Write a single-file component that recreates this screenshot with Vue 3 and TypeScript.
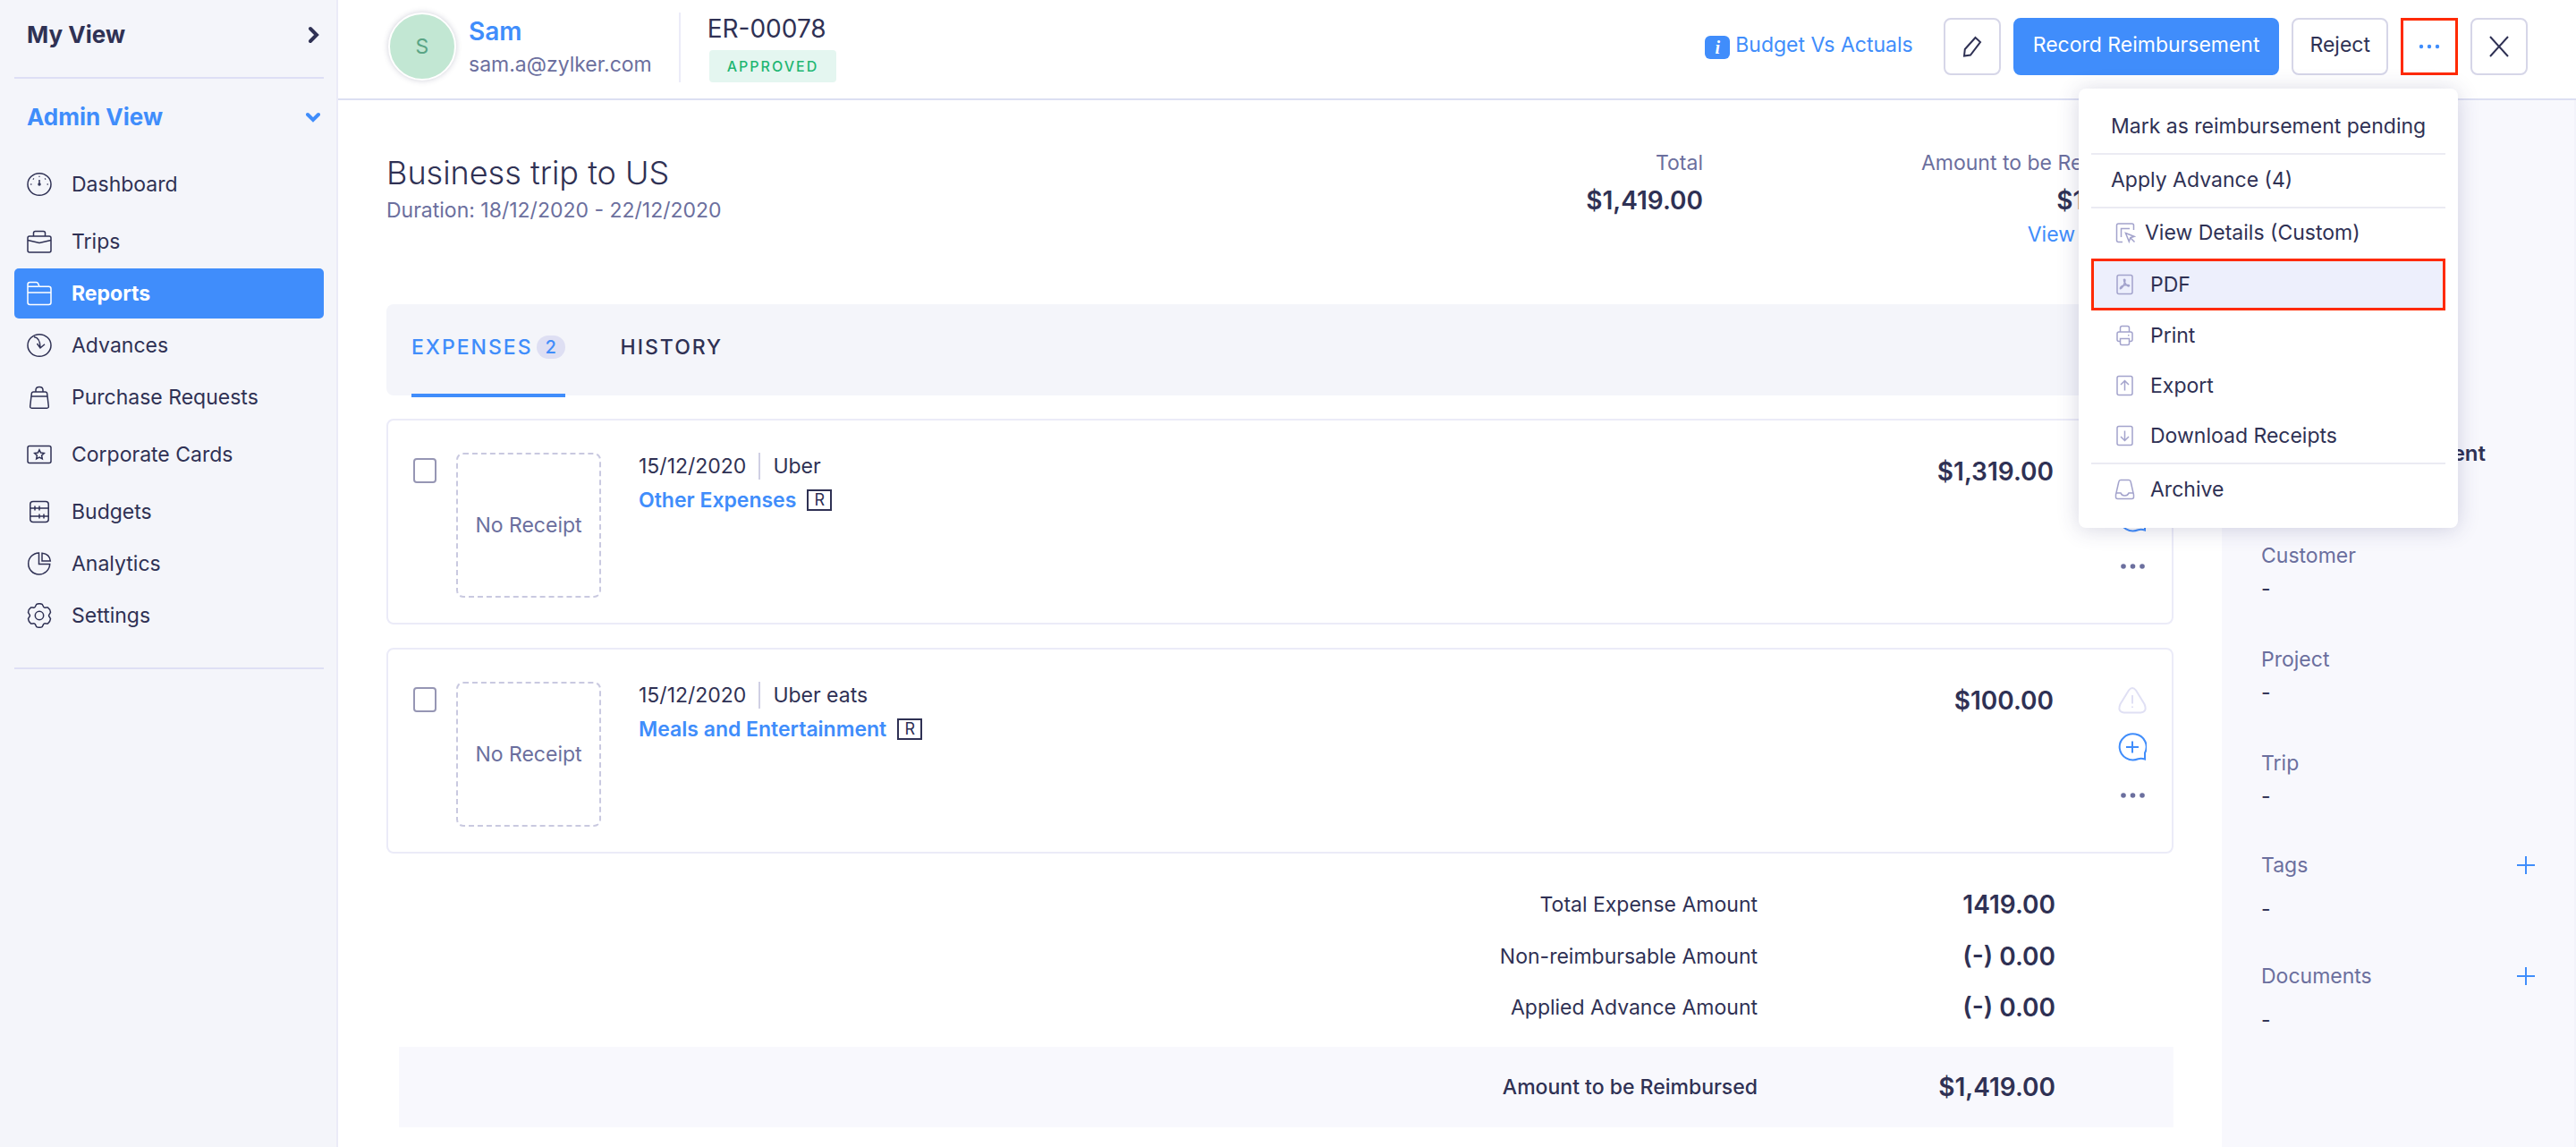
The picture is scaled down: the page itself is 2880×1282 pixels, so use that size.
<script setup lang="ts">
import { ref } from 'vue'

interface NavItem {
  label: string
  icon: string
}

interface Expense {
  id: number
  date: string
  merchant: string
  category: string
  amount: string
}

interface MenuItem {
  label: string
  icon?: string
  divider?: boolean
}

/* Outline of a six-tooth cog centred on 14,14 */
function cogOutline(): string {
  const at = (radius: number, degrees: number): string => {
    const a = (degrees * Math.PI) / 180
    return `${(14 + radius * Math.cos(a)).toFixed(2)} ${(14 + radius * Math.sin(a)).toFixed(2)}`
  }
  let d = `M${at(13, -104)}`
  for (let i = 0; i < 6; i++) {
    const t = -90 + i * 60
    d += `L${at(13, t - 14)}Q${at(14, t)} ${at(13, t + 14)}L${at(11.6, t + 21)}Q${at(9.6, t + 30)} ${at(11.6, t + 39)}`
  }
  return d + 'Z'
}

const navIcons: Record<string, string[]> = {
  dashboard: [
    'M1 14a13 12.3 0 1 0 26 0a13 12.3 0 1 0 -26 0Z',
    'M14 9v5M13 14a1 1 0 1 0 2 0a1 1 0 1 0 -2 0Z',
    'M14 4.8v1M7 7.6l.8.8M21 7.6l-.8.8M4.2 14h1.2M22.6 14h1.2',
  ],
  trips: [
    'M3 8h22q2 0 2 2v14q0 2-2 2H3q-2 0-2-2V10q0-2 2-2Z',
    'M7.5 8V4.500q0-2 2-2h9q2 0 2 2V8',
    'M1 12.500l13 3 13-3',
  ],
  reports: ['M1 24V4q0-2.500 2.500-2.500H10.500q1.500 0 2.200 1.500L14 6.200H24.500q2.500 0 2.500 2.500V24q0 2.500-2.500 2.500h-21Q1 26.500 1 24Z', 'M1 13h26M1.200 6.200H13'],
  advances: ['M1 14a13 12.300 0 1 0 26 0a13 12.300 0 1 0 -26 0Z', 'M8 4.500q7 1 7 12M11.500 12l3.500 5 5-4.200'],
  purchase: [
    'M7.500 8h13q2 0 2.200 2l1.600 14q.2 2.200-1.800 2.200h-17q-2 0-1.800-2.200L5.300 10q.2-2 2.200-2Z',
    'M5 13h18',
    'M10 8V6q0-3.500 4-3.500t4 3.500v2',
  ],
  cards: [
    'M3 4.500h22q2 0 2 2v15q0 2-2 2H3q-2 0-2-2v-15q0-2 2-2Z',
    'M14 8.800l1.600 3.300 3.700.5-2.700 2.500.7 3.700-3.300-1.800-3.300 1.800.7-3.700-2.700-2.500 3.700-.5Z',
  ],
  budgets: [
    'M7 2.500h14q3.200 0 3.200 3v17q0 3-3.200 3H7q-3.200 0-3.200-3v-17q0-3 3.200-3Z',
    'M4 10h20M4 19h20',
    'M9 7.500v5M14 7.500v5M14 16.500v5M19 16.500v5',
  ],
  analytics: ['M13.500 2A12 12 0 1 0 25.700 14.500H13.500Z', 'M17 2.200v8.800h9.300Q25.500 3 17 2.200Z'],
  settings: [cogOutline(), 'M9.300 14a4.700 4.700 0 1 0 9.400 0a4.700 4.700 0 1 0 -9.400 0Z'],
}

const menuIcons: Record<string, string[]> = {
  details: ['M21.500 9V4q0-2-2-2H4.500q-2 0-2 2v16.500q0 2 2 2H9', 'M7.500 17V7.500H17', 'M12.500 12.500l9.500 3.800-4.200 1.400-1.500 4.300ZM18 18l4.500 4.500'],
  pdf: ['M5 1.500h13q2 0 2 2v17q0 2-2 2H5q-2 0-2-2v-17q0-2 2-2Z', 'M10.500 6.500q2-1 1.200 2.500-1.200 5-4.200 7.500-1.500 1-1-.8 1.500-3 7.500-3.200 3-.2 2.500 1.200-1.800 1.200-4.500-3.200-1.700-2.300-1.500-4Z'],
  print: ['M6.500 8V3.500q0-2 2-2h6q2 0 2 2V8', 'M6.500 18.500H5q-2 0-2-2V10q0-2 2-2h13q2 0 2 2v6.500q0 2-2 2h-1.500', 'M6.500 15.500h10v5.500q0 1.500-1.500 1.500H8q-1.500 0-1.500-1.500ZM15 11.800h1.500'],
  export: ['M5 1.500h13q2 0 2 2v17q0 2-2 2H5q-2 0-2-2v-17q0-2 2-2Z', 'M11.500 17.500v-11M7 11l4.500-4.500L16 11'],
  download: ['M5 1.500h13q2 0 2 2v17q0 2-2 2H5q-2 0-2-2v-17q0-2 2-2Z', 'M11.500 6.500v11M7 13l4.500 4.500L16 13'],
  archive: ['M7 1.500h9q1.800 0 2.200 2L21.500 18v2.500q0 2-2 2h-16q-2 0-2-2V18L4.800 3.500q.4-2 2.200-2Z', 'M2 16h5q1 3 4.500 3t4.500-3h5'],
}

const navGroups: NavItem[][] = [
  [{ label: 'Dashboard', icon: 'dashboard' }],
  [
    { label: 'Trips', icon: 'trips' },
    { label: 'Reports', icon: 'reports' },
    { label: 'Advances', icon: 'advances' },
    { label: 'Purchase Requests', icon: 'purchase' },
  ],
  [{ label: 'Corporate Cards', icon: 'cards' }],
  [
    { label: 'Budgets', icon: 'budgets' },
    { label: 'Analytics', icon: 'analytics' },
    { label: 'Settings', icon: 'settings' },
  ],
]

const menuItems: MenuItem[] = [
  { label: 'Mark as reimbursement pending' },
  { label: 'Apply Advance (4)', divider: true },
  { label: 'View Details (Custom)', icon: 'details', divider: true },
  { label: 'PDF', icon: 'pdf' },
  { label: 'Print', icon: 'print' },
  { label: 'Export', icon: 'export' },
  { label: 'Download Receipts', icon: 'download' },
  { label: 'Archive', icon: 'archive', divider: true },
]

const expenses: Expense[] = [
  { id: 1, date: '15/12/2020', merchant: 'Uber', category: 'Other Expenses', amount: '$1,319.00' },
  { id: 2, date: '15/12/2020', merchant: 'Uber eats', category: 'Meals and Entertainment', amount: '$100.00' },
]

const totals = [
  { label: 'Total Expense Amount', value: '1419.00' },
  { label: 'Non-reimbursable Amount', value: '(-) 0.00' },
  { label: 'Applied Advance Amount', value: '(-) 0.00' },
]

const currentPage = ref('Reports')
const activeAction = ref('PDF')
const menuOpen = ref(true)
const selected = ref<number[]>([])
</script>

<template>
  <div class="app">
    <aside class="sidebar">
      <button class="view-switch" type="button">
        My View
        <svg width="16" height="20" viewBox="0 0 16 20" aria-hidden="true"><path d="M5 3l7 7-7 7" /></svg>
      </button>
      <hr class="rule" />
      <button class="view-switch admin" type="button">
        Admin View
        <svg width="16" height="16" viewBox="0 0 16 16" aria-hidden="true"><path d="M2 5l6 6 6-6" /></svg>
      </button>
      <nav class="nav">
        <ul v-for="(group, g) in navGroups" :key="g">
          <li v-for="item in group" :key="item.label">
            <a href="#" class="nav-link" :class="{ current: item.label === currentPage }" @click.prevent="currentPage = item.label">
              <svg width="28" height="28" viewBox="0 0 28 28" aria-hidden="true">
                <path v-for="d in navIcons[item.icon]" :key="d" :d="d" />
              </svg>
              {{ item.label }}
            </a>
          </li>
        </ul>
      </nav>
      <hr class="rule" />
    </aside>

    <main class="main">
      <header class="topbar">
        <span class="avatar">S</span>
        <div class="person">
          <a href="#" class="person-name">Sam</a>
          <span class="person-mail">sam.a@zylker.com</span>
        </div>
        <div class="report-id">
          <span class="report-number">ER-00078</span>
          <span class="status">APPROVED</span>
        </div>
        <div class="actions">
          <a href="#" class="budget-link"><i class="info">i</i>Budget Vs Actuals</a>
          <button class="btn icon-btn" type="button" aria-label="Edit">
            <svg width="24" height="24" viewBox="0 0 24 24" aria-hidden="true"><path d="M15.500 2l5.500 5L10 21.500 3 22.500l.8-7.500Z" /></svg>
          </button>
          <button class="btn primary" type="button">Record Reimbursement</button>
          <button class="btn" type="button">Reject</button>
          <div class="more">
            <button class="btn icon-btn more-btn" type="button" aria-label="More" @click="menuOpen = !menuOpen">
              <svg class="dots" width="24" height="6" viewBox="0 0 24 6" aria-hidden="true">
                <circle cx="3" cy="3" r="2.200" /><circle cx="12" cy="3" r="2.200" /><circle cx="21" cy="3" r="2.200" />
              </svg>
            </button>
            <ul v-if="menuOpen" class="menu">
              <li v-for="item in menuItems" :key="item.label" :class="{ divided: item.divider }">
                <button type="button" class="menu-item" :class="{ active: item.label === activeAction, snug: item.icon === 'details' }" @click="activeAction = item.label">
                  <svg v-if="item.icon" width="24" height="24" viewBox="0 0 24 24" aria-hidden="true">
                    <path v-for="d in menuIcons[item.icon]" :key="d" :d="d" />
                  </svg>
                  {{ item.label }}
                </button>
              </li>
            </ul>
          </div>
          <button class="btn icon-btn" type="button" aria-label="Close">
            <svg width="24" height="24" viewBox="0 0 24 24" aria-hidden="true"><path d="M2 1l20 22M22 1L2 23" /></svg>
          </button>
        </div>
      </header>

      <div class="body">
        <section class="content">
          <div class="summary">
            <div class="trip">
              <h1>Business trip to US</h1>
              <p>Duration: 18/12/2020 - 22/12/2020</p>
            </div>
            <div class="figure">
              <span>Total</span>
              <strong>$1,419.00</strong>
            </div>
            <div class="figure wide">
              <span>Amount to be Reimbursed</span>
              <strong>$1,419.00</strong>
              <a href="#">View Summary</a>
            </div>
          </div>

          <div class="tabs">
            <button class="tab on" type="button">EXPENSES <span class="count">2</span></button>
            <button class="tab" type="button">HISTORY</button>
          </div>

          <article v-for="e in expenses" :key="e.id" class="card">
            <input v-model="selected" type="checkbox" class="check" :value="e.id" :aria-label="e.category" />
            <div class="receipt">No Receipt</div>
            <div class="info-block">
              <div class="line">
                <span>{{ e.date }}</span>
                <span class="merchant">{{ e.merchant }}</span>
              </div>
              <div class="category">
                <a href="#">{{ e.category }}</a>
                <span class="reimb">R</span>
              </div>
            </div>
            <strong class="amount">{{ e.amount }}</strong>
            <div class="tools">
              <button type="button" class="tool warn" aria-label="Violations">
                <svg width="32" height="32" viewBox="0 0 32 32" aria-hidden="true"><path d="M12 4.500q4-5 8 0l9.500 15.500q3.500 8.500-4 9.500H6.500q-7.500-1-4-9.500ZM16 10v9.500M16 22.500v1.500" /></svg>
              </button>
              <button type="button" class="tool comment" aria-label="Add comment">
                <svg width="32" height="32" viewBox="0 0 32 32" aria-hidden="true"><path d="M30 29.500V22.500A15 14.500 0 1 0 22.500 29.200Q26 28.200 30 29.500ZM16 9.500v13M9 16h14" /></svg>
              </button>
              <button type="button" class="tool dots-btn" aria-label="More">
                <svg width="28" height="8" viewBox="0 0 28 8" aria-hidden="true">
                  <circle cx="4" cy="4" r="2.800" /><circle cx="14.500" cy="4" r="2.800" /><circle cx="25" cy="4" r="2.800" />
                </svg>
              </button>
            </div>
          </article>

          <table class="totals">
            <tbody>
              <tr v-for="row in totals" :key="row.label">
                <th scope="row">{{ row.label }}</th>
                <td>{{ row.value }}</td>
              </tr>
            </tbody>
            <tfoot>
              <tr>
                <th scope="row">Amount to be Reimbursed</th>
                <td>$1,419.00</td>
              </tr>
            </tfoot>
          </table>
        </section>

        <aside class="details">
          <dl class="fields first">
            <div>
              <dt>Department</dt>
              <dd class="strong">Product Development</dd>
            </div>
          </dl>
          <dl class="fields">
            <div v-for="name in ['Customer', 'Project', 'Trip']" :key="name">
              <dt>{{ name }}</dt>
              <dd>-</dd>
            </div>
          </dl>
          <dl class="fields addable">
            <div v-for="name in ['Tags', 'Documents']" :key="name">
              <dt>
                {{ name }}
                <button type="button" class="add" :aria-label="'Add ' + name">
                  <svg width="20" height="20" viewBox="0 0 20 20" aria-hidden="true"><path d="M10 0v20M0 10h20" /></svg>
                </button>
              </dt>
              <dd>-</dd>
            </div>
          </dl>
        </aside>
      </div>
    </main>
  </div>
</template>

<style>
body {
  margin: 0;
  background: #fff;
}
</style>

<style scoped>
.app {
  display: flex;
  min-height: 100vh;
  font-family: Inter, 'Liberation Sans', sans-serif;
  font-size: 23px;
  line-height: 32px;
  color: #2f3154;
}
* {
  box-sizing: border-box;
}
svg {
  flex: none;
  fill: none;
  stroke: currentColor;
}
button {
  font: inherit;
  color: inherit;
  background: none;
  border: 0;
  padding: 0;
  cursor: pointer;
}
a {
  color: #408dfb;
  text-decoration: none;
}
ul,
dl,
dd,
h1,
p {
  margin: 0;
  padding: 0;
  list-style: none;
}

/* Sidebar */
.sidebar {
  flex: none;
  width: 378px;
  padding: 0 14px 0 16px;
  background: #f4f5fa;
  border-right: 2px solid #ebebf7;
}
.view-switch {
  display: flex;
  align-items: center;
  justify-content: space-between;
  width: 100%;
  height: 86px;
  padding: 0 4px 8px 14px;
  font-size: 26px;
  font-weight: 700;
}
.view-switch svg {
  stroke-width: 4;
  stroke-linecap: round;
}
.view-switch.admin {
  padding-bottom: 0;
  color: #408dfb;
}
.rule {
  height: 2px;
  margin: 0;
  border: 0;
  background: #dedff5;
}
.nav {
  display: flex;
  flex-direction: column;
  gap: 8px;
  padding: 4px 0 30px;
}
.nav ul {
  display: flex;
  flex-direction: column;
  gap: 2px;
}
.nav-link {
  display: flex;
  align-items: center;
  gap: 22px;
  height: 56px;
  padding-left: 14px;
  border-radius: 5px;
  color: inherit;
}
.nav-link svg {
  stroke-width: 1.5;
}
.nav-link.current {
  background: #408dfb;
  color: #fff;
  font-weight: 700;
}

/* Top bar */
.main {
  flex: 1;
  display: flex;
  flex-direction: column;
  min-width: 0;
}
.topbar {
  display: flex;
  align-items: flex-start;
  height: 112px;
  padding: 14px 54px 0 56px;
  border-bottom: 2px solid #dcdff2;
}
.avatar {
  display: flex;
  align-items: center;
  justify-content: center;
  width: 76px;
  height: 76px;
  border: 2px solid #fff;
  border-radius: 50%;
  background: #c2e7d3;
  box-shadow: 0 0 6px rgba(60, 60, 100, 0.25);
  color: #5aa585;
}
.person {
  display: flex;
  flex-direction: column;
  height: 78px;
  margin-left: 14px;
  padding-right: 30px;
  border-right: 2px solid #ebebf8;
}
.person-name {
  font-size: 28px;
  line-height: 42px;
  font-weight: 600;
}
.person-mail {
  line-height: 32px;
  color: #6b6f9e;
}
.report-id {
  display: flex;
  flex-direction: column;
  align-items: flex-start;
  margin-left: 30px;
}
.report-number {
  font-size: 28px;
  line-height: 36px;
}
.status {
  margin: 6px 0 0 2px;
  padding: 0 20px;
  border-radius: 4px;
  background: #e4f6f0;
  color: #1fb673;
  font-size: 16px;
  line-height: 36px;
  font-weight: 500;
  letter-spacing: 2px;
}
.actions {
  display: flex;
  align-items: center;
  gap: 14px;
  margin: 6px 0 0 auto;
}
.budget-link {
  display: flex;
  align-items: center;
  gap: 6px;
  margin: 0 20px 4px 0;
}
.info {
  width: 28px;
  height: 26px;
  margin-top: 6px;
  border-radius: 6px;
  background: #408dfb;
  color: #fff;
  font: italic 700 20px/26px 'Liberation Serif', serif;
  text-align: center;
}
.btn {
  display: flex;
  align-items: center;
  justify-content: center;
  height: 64px;
  padding: 0 18px 4px;
  border: 2px solid #d6d6e8;
  border-radius: 8px;
  background: #fff;
  white-space: nowrap;
}
.icon-btn {
  width: 64px;
  padding: 0;
}
.btn svg {
  stroke-width: 2;
}
.btn.primary {
  padding: 0 20px 4px;
  border-color: #408dfb;
  background: #408dfb;
  color: #fff;
}
.more {
  position: relative;
}
.more-btn {
  border: 3px solid #ff2a00;
  border-radius: 0;
  color: #408dfb;
}
.btn .dots {
  fill: currentColor;
  stroke: none;
}

/* Drop-down menu */
.menu {
  position: absolute;
  z-index: 2;
  top: 79px;
  right: 0;
  width: 424px;
  padding: 14px 14px 15px;
  border-radius: 8px;
  background: #fff;
  box-shadow: 0 2px 24px rgba(50, 50, 110, 0.2);
}
.divided {
  margin-top: 2px;
  border-top: 2px solid #ebebf3;
}
.menu-item {
  display: flex;
  align-items: center;
  gap: 16px;
  width: 100%;
  height: 56px;
  padding-left: 22px;
  white-space: nowrap;
}
.menu-item svg {
  margin-left: 4px;
  color: #a3a3cc;
  stroke-width: 1.5;
}
.menu-item.snug {
  gap: 10px;
  height: 54px;
  margin-bottom: 2px;
}
.menu-item.active {
  height: 58px;
  padding-left: 19px;
  border: 3px solid #ff2a00;
  background: #edeffc;
}

/* Report body */
.body {
  flex: 1;
  display: flex;
}
.content {
  flex: 1;
  min-width: 0;
  padding: 50px 54px 22px;
}
.summary {
  display: flex;
  margin-bottom: 62px;
}
.trip {
  flex: 1;
  padding-top: 9px;
}
.trip h1 {
  font-size: 36px;
  line-height: 44px;
  font-weight: 300;
}
.trip p {
  line-height: 40px;
  color: #6b6f9e;
}
.figure {
  display: flex;
  flex-direction: column;
  align-items: flex-end;
  line-height: 40px;
}
.figure.wide {
  width: 526px;
}
.figure span {
  color: #6b6f9e;
}
.figure strong {
  font-size: 28px;
  line-height: 44px;
  font-weight: 600;
}
.figure a {
  line-height: 32px;
}
.tabs {
  display: flex;
  gap: 62px;
  height: 102px;
  padding-left: 28px;
  border-radius: 8px;
  background: #f4f5fa;
}
.tab {
  display: flex;
  align-items: center;
  gap: 4px;
  height: 104px;
  padding-bottom: 4px;
  border-bottom: 4px solid transparent;
  font-weight: 500;
  letter-spacing: 2px;
}
.tab.on {
  border-color: #408dfb;
  color: #408dfb;
}
.count {
  width: 32px;
  border-radius: 13px;
  background: #dedff3;
  font-size: 20px;
  line-height: 26px;
  letter-spacing: 0;
  text-align: center;
}
.card {
  display: flex;
  align-items: flex-start;
  margin-top: 26px;
  padding: 36px 28px 28px;
  border: 2px solid #ebebf8;
  border-radius: 8px;
}
.check {
  appearance: none;
  width: 26px;
  height: 28px;
  margin: 6px 22px 0 0;
  border: 2px solid #9696b4;
  border-radius: 4px;
  background: #fff;
}
.check:checked {
  background: #408dfb;
}
.receipt {
  display: flex;
  align-items: center;
  justify-content: center;
  width: 162px;
  height: 162px;
  border: 2px dashed #c9c9e0;
  border-radius: 8px;
  color: #6b6f9e;
}
.info-block {
  flex: 1;
  padding-left: 42px;
}
.line,
.category {
  display: flex;
  align-items: center;
  line-height: 30px;
}
.merchant {
  margin-left: 14px;
  padding-left: 14px;
  border-left: 2px solid #d0d0e4;
}
.category {
  gap: 12px;
  margin-top: 8px;
  font-weight: 600;
}
.reimb {
  width: 28px;
  border: 2px solid #2f3154;
  font-size: 18px;
  line-height: 20px;
  font-weight: 400;
  text-align: center;
}
.amount {
  font-size: 28px;
  line-height: 42px;
  font-weight: 600;
}
.tools {
  display: flex;
  flex-direction: column;
  gap: 20px;
  margin: 5px 0 -20px 72px;
}
.tool {
  display: flex;
  align-items: center;
  justify-content: center;
  width: 32px;
  height: 32px;
}
.tool svg {
  stroke-width: 2;
}
.warn {
  color: #e0e0f4;
}
.comment {
  color: #408dfb;
}
.tool.dots-btn {
  height: 36px;
  color: #6b6f9e;
}
.dots-btn svg {
  fill: currentColor;
  stroke: none;
}

/* Totals */
.totals {
  width: calc(100% - 14px);
  margin: 28px 0 0 14px;
  border-collapse: collapse;
  text-align: right;
}
.totals th {
  height: 58px;
  padding: 0;
  font-weight: 400;
}
.totals td {
  width: 465px;
  padding: 0 132px 0 0;
  font-size: 28px;
  font-weight: 600;
}
.totals tbody tr:last-child > * {
  height: 72px;
  padding-bottom: 16px;
}
.totals tfoot {
  background: #f8f8fd;
}
.totals tfoot th {
  height: 90px;
  font-weight: 500;
}

/* Details panel */
.details {
  flex: none;
  width: 396px;
  padding: 340px 44px 40px;
  background: #f8f8fd;
  border-right: 2px solid #f3f3fa;
}
.fields {
  display: flex;
  flex-direction: column;
  gap: 42px;
  margin-bottom: 40px;
}
.fields.first {
  margin-bottom: 77px;
}
.fields dt {
  display: flex;
  align-items: center;
  justify-content: space-between;
  line-height: 36px;
  color: #6b6f9e;
}
.fields dd {
  line-height: 38px;
}
.fields .strong {
  font-size: 24px;
  font-weight: 600;
}
.addable {
  gap: 38px;
}
.addable dd {
  margin-top: 12px;
}
.add {
  display: flex;
  color: #408dfb;
}
.add svg {
  stroke-width: 2;
}
</style>
